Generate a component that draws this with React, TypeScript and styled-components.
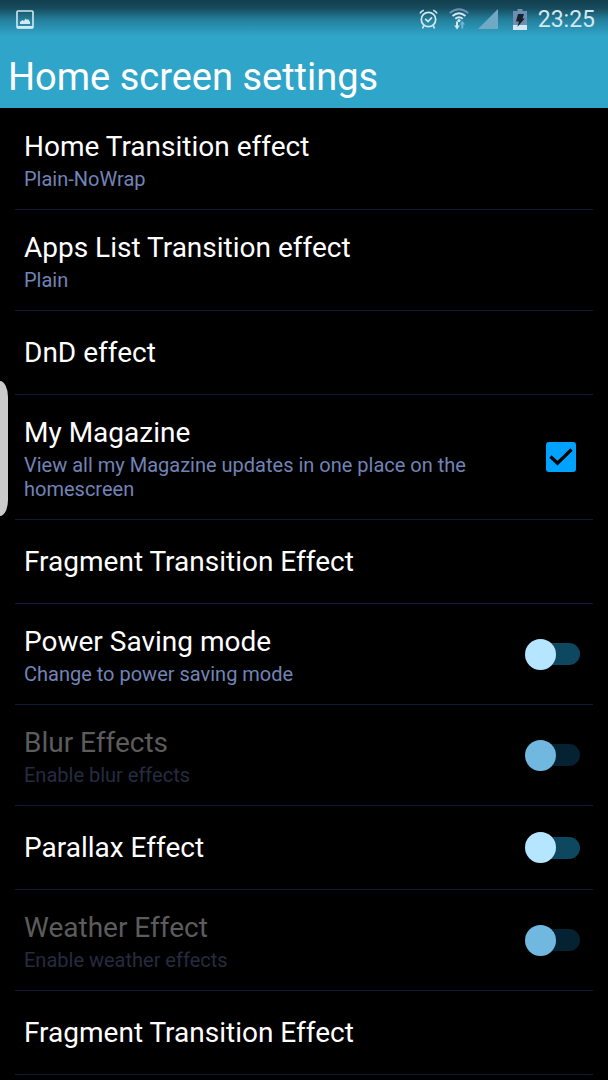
import React, { useState } from "react";
import styled, { createGlobalStyle } from "styled-components";

const GlobalStyle = createGlobalStyle`
  *, *::before, *::after { box-sizing: border-box; }
  body {
    margin: 0;
    background: #000;
    font-family: Roboto, "Liberation Sans", sans-serif;
  }
`;

const Screen = styled.div`
  position: relative;
  min-height: 100vh;
  background: #000;
  color: #fff;
`;

const Header = styled.header`
  background: #30a5ca;
`;

const StatusBar = styled.div`
  display: flex;
  align-items: center;
  justify-content: space-between;
  height: 38px;
  padding: 0 13px 0 16px;
  background: linear-gradient(#123f4e 0, #164b5c 8px, #24809d 20px, #30a5ca 36px);
  color: #d3e8f0;
`;

const StatusIcons = styled.div`
  display: flex;
  align-items: center;
`;

const StatusGlyph = styled.svg<{ $gap?: number }>`
  display: block;
  margin-right: ${(p) => p.$gap ?? 0}px;
`;

const Clock = styled.time`
  padding-top: 2px;
  font-size: 23px;
  line-height: 38px;
`;

const Title = styled.h1`
  margin: 0;
  padding: 14px 8px 6px;
  font-size: 38px;
  line-height: 50px;
  font-weight: 400;
`;

const List = styled.ul`
  list-style: none;
  margin: 0;
  padding: 1px 15px 0;
`;

const Item = styled.li`
  border-bottom: 1px solid #101a36;
`;

const RowButton = styled.button`
  display: flex;
  align-items: center;
  width: 100%;
  min-height: 83px;
  padding: 19px 9px 18px;
  border: 0;
  background: none;
  color: inherit;
  font: inherit;
  text-align: left;
  cursor: pointer;
`;

const RowLabel = styled.label`
  display: flex;
  align-items: center;
  justify-content: space-between;
  min-height: 83px;
  padding: 0 13px 0 9px;
  cursor: pointer;
`;

const Texts = styled.span`
  display: block;
  max-width: 470px;
  ${RowLabel} & { padding: 19px 0 18px; }
`;

const Name = styled.span<{ $dim?: boolean }>`
  display: block;
  font-size: 28px;
  line-height: 38px;
  color: ${(p) => (p.$dim ? "#5c5c5c" : "#fff")};
`;

const Summary = styled.span<{ $dim?: boolean }>`
  display: block;
  margin-top: 1px;
  font-size: 20px;
  line-height: 24px;
  color: ${(p) => (p.$dim ? "#262b40" : "#7283b6")};
`;

const Control = styled.span`
  position: relative;
  display: flex;
  flex: none;
`;

const Switch = styled.input`
  appearance: none;
  display: grid;
  align-items: center;
  width: 55px;
  height: 31px;
  margin: 0;
  cursor: inherit;

  &::before, &::after {
    content: "";
    grid-area: 1 / 1;
  }
  &::before {
    height: 22px;
    margin-left: 8px;
    border-radius: 11px;
    background: #0e4760;
  }
  &::after {
    width: 31px;
    height: 31px;
    border-radius: 50%;
    background: #b6e6ff;
  }
  &:checked::after { justify-self: end; }
  &:disabled::before { background: #052232; }
  &:disabled::after { background: #70b8e0; }
`;

const CheckBox = styled.input`
  appearance: none;
  width: 30px;
  height: 30px;
  margin: 0 4px 0 0;
  border: 2px solid #00a2ff;
  border-radius: 3px;
  cursor: inherit;

  &:checked { background: #00a2ff; }
  &:not(:checked) + svg { display: none; }
`;

const Tick = styled.svg`
  position: absolute;
  left: 0;
  top: 0;
  pointer-events: none;
`;

const EdgeHandle = styled.button`
  position: absolute;
  left: 0;
  top: 381px;
  width: 8px;
  height: 135px;
  padding: 0;
  border: 0;
  border-radius: 0 8px 8px 0 / 0 16px 16px 0;
  background: #cbcbcb;
`;

const PictureIcon = () => (
  <StatusGlyph width="18" height="19" viewBox="0 0 18 19" aria-hidden="true">
    <rect x="1" y="1" width="16" height="17" rx="1" fill="none" stroke="currentColor" strokeWidth="1.6" />
    <path d="M1 16h16v2.500H1z" fill="currentColor" />
    <path d="M4 14v-2l2.500-2 1.500 1 1.500-2.500L11 10l1-1 2 3v2z" fill="currentColor" />
  </StatusGlyph>
);

const AlarmIcon = () => (
  <StatusGlyph $gap={11} width="19" height="20" viewBox="0 0 19 20" fill="none" stroke="currentColor" strokeWidth="1.7" aria-hidden="true">
    <circle cx="9.500" cy="10.500" r="7.200" />
    <path d="M6.200 9.800l2.800 2.800 4-4.200" />
    <path d="M1 4.500Q2 2 4.800 1.200M18 4.500Q17 2 14.200 1.200M4.800 16.500L3.500 19.500M14.200 16.500l1.300 3" />
  </StatusGlyph>
);

const WifiIcon = () => (
  <StatusGlyph $gap={9} width="20" height="22" viewBox="0 0 20 22" fill="none" strokeWidth="1.900" aria-hidden="true">
    <path d="M.7 5Q10-2.500 19.300 5" stroke="#6f8fb5" />
    <path d="M3.500 8Q10 2.300 16.500 8M6.300 10.800Q10 7.500 13.700 10.800" stroke="currentColor" />
    <circle cx="10" cy="12.600" r="1.600" fill="currentColor" />
    <path d="M7 13.500h2v4h1.800L8 21.500l-2.800-4H7z" fill="currentColor" />
    <path d="M12.300 20.500h2V16.500H16l-2.700-3.800-2.600 3.800h1.600z" fill="#74b4d2" />
  </StatusGlyph>
);

const SignalIcon = () => (
  <StatusGlyph $gap={15} width="20" height="20" viewBox="0 0 20 20" aria-hidden="true">
    <path d="M20 0v20H0z" fill="#6fa9c4" />
  </StatusGlyph>
);

const BatteryIcon = () => (
  <StatusGlyph $gap={11} width="14" height="21" viewBox="0 0 14 21" aria-hidden="true">
    <path d="M4.500 0h5v2H14v14H0V2h4.500z" fill="#6c8fb2" />
    <path d="M0 16h14v5H0z" fill="currentColor" />
    <path d="M5 5H11L9.500 9.500h2.300L4.300 18 6 12.500H3z" fill="#17212b" />
  </StatusGlyph>
);

type Kind = "link" | "check" | "switch";
interface Setting {
  id: string;
  name: string;
  summary?: string;
  kind: Kind;
  on?: boolean;
  disabled?: boolean;
}

const settings: Setting[] = [
  { id: "home", name: "Home Transition effect", summary: "Plain-NoWrap", kind: "link" },
  { id: "apps", name: "Apps List Transition effect", summary: "Plain", kind: "link" },
  { id: "dnd", name: "DnD effect", kind: "link" },
  { id: "magazine", name: "My Magazine", summary: "View all my Magazine updates in one place on the homescreen", kind: "check", on: true },
  { id: "fragment", name: "Fragment Transition Effect", kind: "link" },
  { id: "power", name: "Power Saving mode", summary: "Change to power saving mode", kind: "switch" },
  { id: "blur", name: "Blur Effects", summary: "Enable blur effects", kind: "switch", disabled: true },
  { id: "parallax", name: "Parallax Effect", kind: "switch" },
  { id: "weather", name: "Weather Effect", summary: "Enable weather effects", kind: "switch", disabled: true },
  { id: "fragment-2", name: "Fragment Transition Effect", kind: "link" },
];

function SettingRow({ setting }: { setting: Setting }) {
  const { id, name, summary, kind, disabled } = setting;
  const [on, setOn] = useState(Boolean(setting.on));
  const texts = (
    <Texts>
      <Name $dim={disabled}>{name}</Name>
      {summary && <Summary $dim={disabled}>{summary}</Summary>}
    </Texts>
  );

  if (kind === "link") {
    return (
      <Item>
        <RowButton type="button">{texts}</RowButton>
      </Item>
    );
  }

  return (
    <Item>
      <RowLabel htmlFor={id}>
        {texts}
        <Control>
          {kind === "switch" ? (
            <Switch id={id} type="checkbox" role="switch" checked={on} disabled={disabled} onChange={() => setOn(!on)} />
          ) : (
            <>
              <CheckBox id={id} type="checkbox" checked={on} onChange={() => setOn(!on)} />
              <Tick width="30" height="30" viewBox="0 0 30 30" aria-hidden="true">
                <path d="M4.500 14.500l7 6.700L25.500 7.500" fill="none" stroke="#000" strokeWidth="3.200" />
              </Tick>
            </>
          )}
        </Control>
      </RowLabel>
    </Item>
  );
}

export default function App() {
  return (
    <Screen>
      <GlobalStyle />
      <Header>
        <StatusBar>
          <PictureIcon />
          <StatusIcons>
            <AlarmIcon />
            <WifiIcon />
            <SignalIcon />
            <BatteryIcon />
            <Clock>23:25</Clock>
          </StatusIcons>
        </StatusBar>
        <Title>Home screen settings</Title>
      </Header>
      <main>
        <List>
          {settings.map((s) => (
            <SettingRow key={s.id} setting={s} />
          ))}
        </List>
      </main>
      <EdgeHandle type="button" aria-label="Open edge panel" />
    </Screen>
  );
}
